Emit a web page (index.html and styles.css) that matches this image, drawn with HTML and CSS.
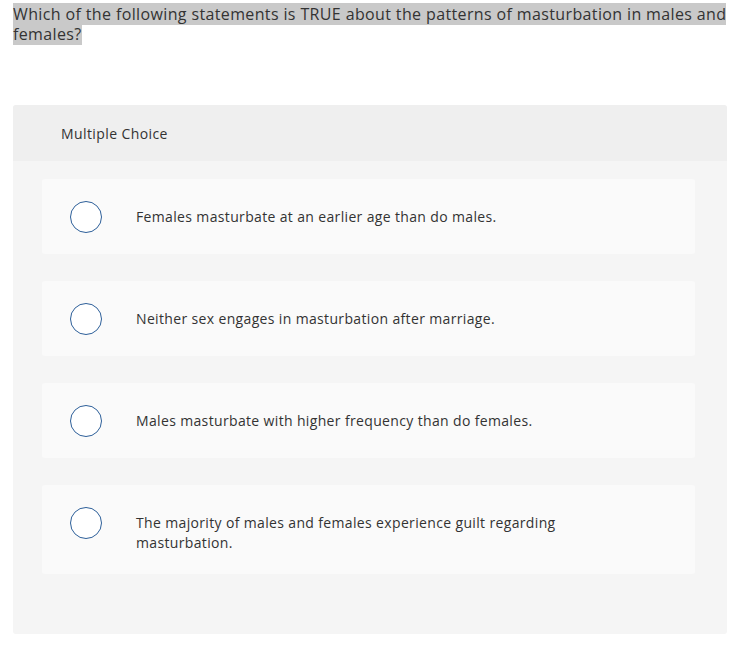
FILE: index.html
```html
<!DOCTYPE html>
<html>
<head>
<meta charset="utf-8">
<link rel="stylesheet" href="styles.css">
</head>
<body>
<div class="page">
  <p class="question"><span class="hl">Which of the following statements is TRUE about the patterns of masturbation in males and females?</span></p>
  <section class="panel">
    <div class="panel-head">Multiple Choice</div>
    <div class="panel-body">
      <div class="option"><span class="radio"></span><span class="label">Females masturbate at an earlier age than do males.</span></div>
      <div class="option"><span class="radio"></span><span class="label">Neither sex engages in masturbation after marriage.</span></div>
      <div class="option"><span class="radio"></span><span class="label">Males masturbate with higher frequency than do females.</span></div>
      <div class="option"><span class="radio"></span><span class="label">The majority of males and females experience guilt regarding<br>masturbation.</span></div>
    </div>
  </section>
</div>
</body>
</html>
```

FILE: styles.css
```css
* { box-sizing: border-box; }
html, body { margin: 0; padding: 0; background: #ffffff; }
body {
  font-family: "Open Sans", "Liberation Sans", sans-serif;
  color: #333333;
}
.page {
  padding: 4px 5px 0 13px;
}
.question {
  margin: 0;
  font-size: 16px;
  line-height: 20px;
  letter-spacing: 0.37px;
}
.hl { background: #c9c9c9; }
.panel {
  margin-top: 61px;
  border-radius: 3px;
  overflow: hidden;
  background: #f5f5f5;
  width: 714px;
}
.panel-head {
  background: #efefef;
  height: 56px;
  padding-left: 48px;
  display: flex;
  align-items: center;
  font-size: 14px;
  letter-spacing: 0.4px;
}
.panel-body {
  padding: 18px 32px 60px 29px;
  display: flex;
  flex-direction: column;
  gap: 27px;
}
.option {
  background: #fafafa;
  border-radius: 3px;
  padding: 22px 28px 21px 28px;
  display: flex;
  align-items: flex-start;
}
.radio {
  flex: none;
  width: 32px;
  height: 32px;
  border-radius: 50%;
  border: 1.5px solid #2d5f99;
  background: #ffffff;
}
.label {
  margin-left: 34px;
  padding-top: 6px;
  font-size: 14px;
  line-height: 20px;
  letter-spacing: 0.35px;
}
```
